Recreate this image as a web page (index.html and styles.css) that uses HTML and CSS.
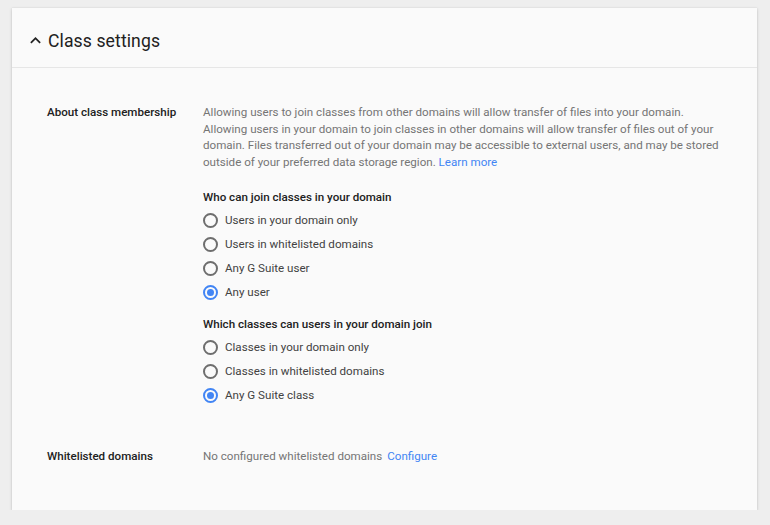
FILE: index.html
```html
<!DOCTYPE html>
<html>
<head>
<meta charset="utf-8">
<link rel="stylesheet" href="styles.css">
</head>
<body>
<div class="card">
  <div class="card-header">
    <svg class="chevron" width="11" height="7" viewBox="0 0 12 8"><path d="M1.4 7.4 6 2.8l4.6 4.6L12 6 6 0 0 6z" fill="#212121"/></svg>
    <h1 class="title">Class settings</h1>
  </div>
  <div class="card-body">
    <div class="row">
      <div class="row-label">About class membership</div>
      <div class="row-content">
        <p class="desc">Allowing users to join classes from other domains will allow transfer of files into your domain. Allowing users in your domain to join classes in other domains will allow transfer of files out of your domain. Files transferred out of your domain may be accessible to external users, and may be stored outside of your preferred data storage region. <a class="link" href="#">Learn more</a></p>
        <div class="group">
          <div class="group-title">Who can join classes in your domain</div>
          <div class="radio-list">
            <div class="radio-row"><span class="radio"></span><span>Users in your domain only</span></div>
            <div class="radio-row"><span class="radio"></span><span>Users in whitelisted domains</span></div>
            <div class="radio-row"><span class="radio"></span><span>Any G Suite user</span></div>
            <div class="radio-row"><span class="radio checked"></span><span>Any user</span></div>
          </div>
        </div>
        <div class="group second">
          <div class="group-title">Which classes can users in your domain join</div>
          <div class="radio-list">
            <div class="radio-row"><span class="radio"></span><span>Classes in your domain only</span></div>
            <div class="radio-row"><span class="radio"></span><span>Classes in whitelisted domains</span></div>
            <div class="radio-row"><span class="radio checked"></span><span>Any G Suite class</span></div>
          </div>
        </div>
      </div>
    </div>
    <div class="row whitelist">
      <div class="row-label">Whitelisted domains</div>
      <div class="row-content"><span class="muted">No configured whitelisted domains</span><a class="link configure" href="#">Configure</a></div>
    </div>
  </div>
</div>
</body>
</html>
```

FILE: styles.css
```css
html, body {
  margin: 0;
  padding: 0;
  background: #eeeeee;
  font-family: Roboto, "Liberation Sans", Arial, sans-serif;
}
body {
  padding: 8px 13px 0 12px;
}
.card {
  width: 745px;
  height: 502px;
  box-sizing: border-box;
  background: #fafafa;
  box-shadow: 0 1px 3px rgba(0,0,0,0.18), 0 0 1px rgba(0,0,0,0.1);
}
.card-header {
  height: 60px;
  box-sizing: border-box;
  border-bottom: 1px solid #e6e6e6;
  display: flex;
  align-items: center;
  padding-left: 18px;
  padding-top: 6px;
}
.chevron {
  margin-right: 7px;
  margin-top: -1px;
}
.title {
  margin: 0;
  font-size: 17.6px;
  font-weight: 400;
  color: #212121;
  letter-spacing: 0.1px;
}
.card-body {
  padding: 36px 0 0 35px;
}
.row {
  display: flex;
  font-size: 11.6px;
  line-height: 16.7px;
}
.row-label {
  width: 156px;
  flex-shrink: 0;
  font-weight: 500;
  color: #212121;
}
.row-content {
  width: 516px;
  color: #212121;
}
.desc {
  margin: 0;
  color: #757575;
}
.link {
  color: #4285f4;
  text-decoration: none;
}
.group {
  margin-top: 18px;
}
.group.second {
  margin-top: 11px;
}
.group-title {
  font-weight: 500;
  color: #212121;
}
.radio-list {
  margin-top: 3px;
  display: flex;
  flex-direction: column;
}
.radio-row {
  height: 24px;
  display: flex;
  align-items: center;
  color: #424242;
}
.radio {
  width: 15px;
  height: 15px;
  box-sizing: border-box;
  border: 2px solid #6e6e6e;
  border-radius: 50%;
  margin-right: 7px;
  display: flex;
  align-items: center;
  justify-content: center;
}
.radio.checked {
  border-color: #4285f4;
}
.radio.checked::after {
  content: "";
  width: 7px;
  height: 7px;
  border-radius: 50%;
  background: #4285f4;
}
.whitelist {
  margin-top: 41px;
}
.muted {
  color: #757575;
}
.configure {
  margin-left: 5px;
}
```
